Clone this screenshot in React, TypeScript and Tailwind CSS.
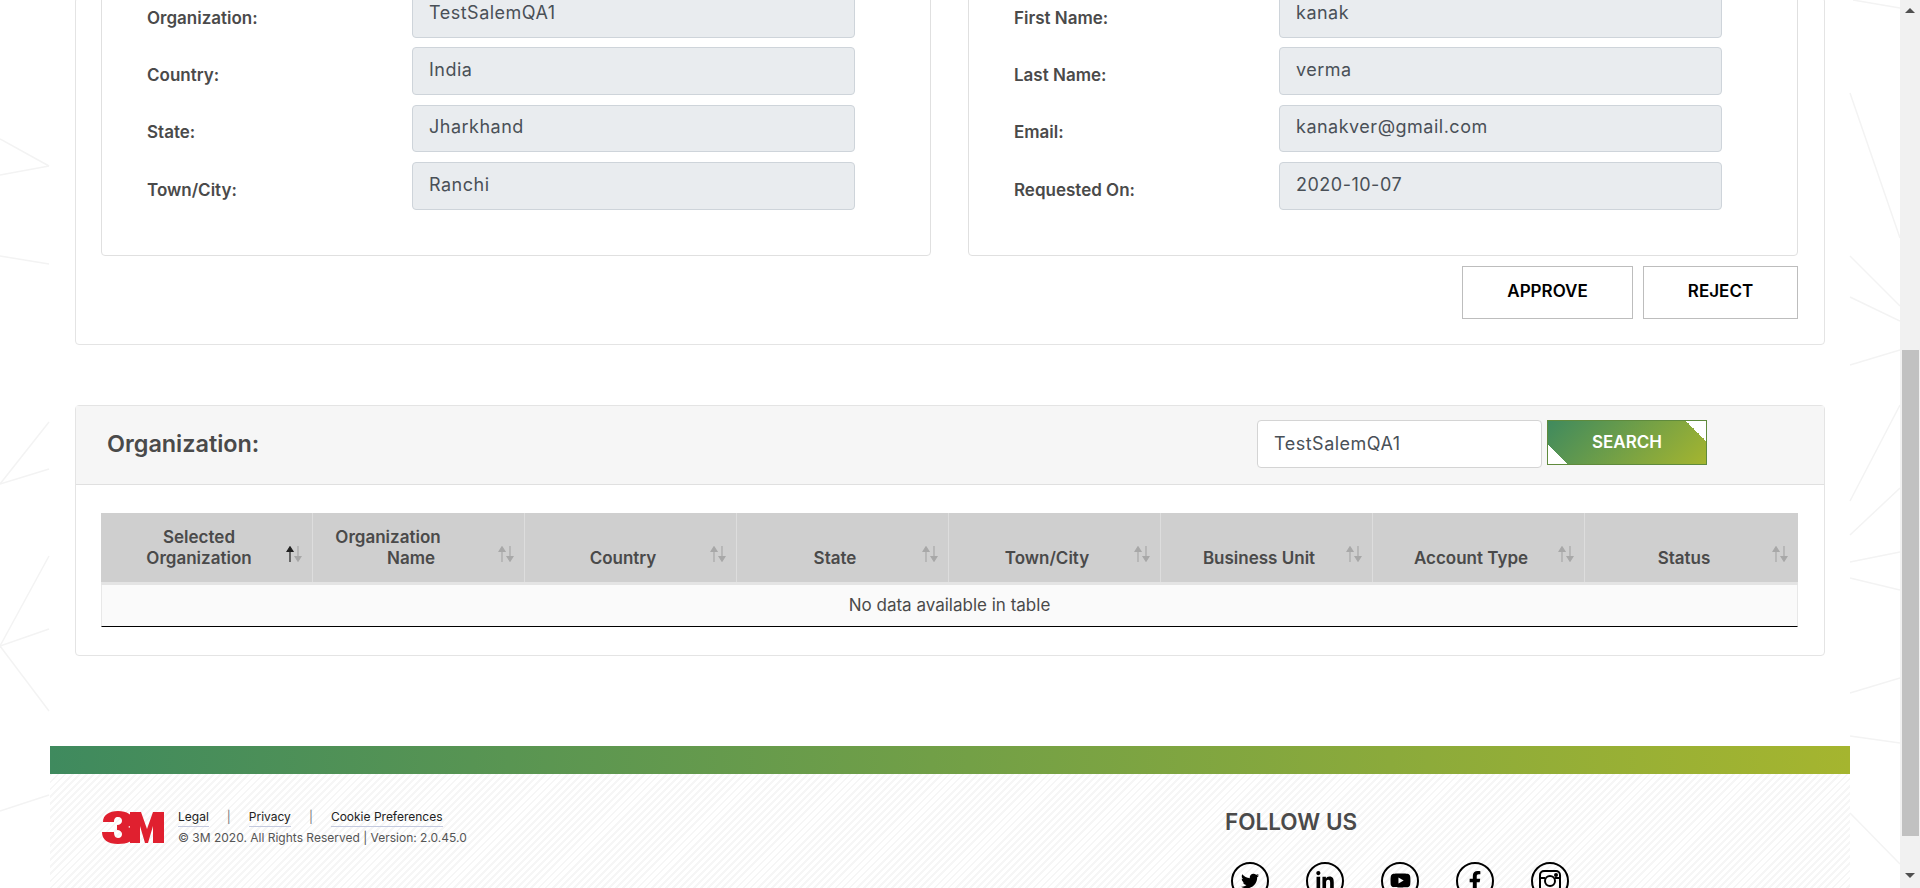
import { FaTwitter, FaLinkedinIn, FaYoutube, FaFacebookF } from "react-icons/fa";

const leftFields = [
  ["Organization:", "TestSalemQA1"],
  ["Country:", "India"],
  ["State:", "Jharkhand"],
  ["Town/City:", "Ranchi"],
];

const rightFields = [
  ["First Name:", "kanak"],
  ["Last Name:", "verma"],
  ["Email:", "kanakver@gmail.com"],
  ["Requested On:", "2020-10-07"],
];

const columns = [
  ["Selected", "Organization"],
  ["Organization", "Name"],
  ["Country"],
  ["State"],
  ["Town/City"],
  ["Business Unit"],
  ["Account Type"],
  ["Status"],
];

// faint burst lines behind the page, left and right of the white column
const bgLines = [
  [0, 139, 49, 166],
  [0, 175, 49, 166],
  [0, 256, 49, 264],
  [0, 484, 49, 422],
  [0, 484, 49, 469],
  [0, 646, 49, 556],
  [0, 646, 49, 629],
  [0, 646, 49, 711],
  [0, 811, 49, 795],
  [1853, 0, 1900, 8],
  [1850, 93, 1900, 238],
  [1850, 256, 1900, 306],
  [1850, 297, 1900, 321],
  [1850, 365, 1900, 350],
  [1850, 501, 1900, 405],
  [1850, 535, 1900, 488],
  [1850, 562, 1900, 552],
  [1850, 578, 1900, 590],
  [1850, 693, 1900, 678],
  [1850, 736, 1900, 743],
  [1850, 813, 1900, 864],
];

const SortIcon = ({ active }: { active: boolean }) => (
  <svg width="16" height="16" viewBox="0 0 16 16" className="mb-[20px] shrink-0">
    <path d="M4 16V3M1 5.5 4 0.8l3 4.7z" fill={active ? "#222" : "#a8a8a8"} stroke={active ? "#222" : "#a8a8a8"} strokeWidth="1.2" />
    <path d="M12 0v13M9 10.5l3 4.7 3-4.7z" fill="#a8a8a8" stroke="#a8a8a8" strokeWidth="1.2" />
  </svg>
);

const FieldCard = ({ fields }: { fields: string[][] }) => (
  <div className="-mt-[20px] flex flex-col gap-[9.67px] rounded border border-[#e0e0e0] pb-[45px] pl-[45px] pt-[11px]">
    {fields.map(([label, value]) => (
      <div key={label} className="flex items-center">
        <label className="mt-[9px] w-[265px] text-[17px] font-semibold text-[#4a4a4a]">{label}</label>
        <input
          readOnly
          value={value}
          className="h-[47.67px] w-[443px] rounded border border-[#ced4da] bg-[#e9ecef] pb-[3px] pl-[16px] text-[18px] tracking-[0.5px] text-[#495057] outline-none"
        />
      </div>
    ))}
  </div>
);

const Logo3M = () => (
  <svg width="62" height="33" viewBox="0 0 62 33" className="shrink-0">
    <path
      fill="#e0202f"
      d="M1 11C1 4 7 0 16 0c9 0 15 4 15 9 0 4-2 6-5 7 4 1 6 4 6 8 0 6-6 9-16 9C6 33 0 29 0 21h12c0 3 1 6 4 6s4-2 4-4-2-4-5-4v-5c3 0 5-2 5-4s-1-4-4-4-4 2-4 5z"
    />
    <path fill="#e0202f" d="M28 1h11l6 17 6-17h11v31H51V15l-5 17h-3l-5-17v17H28z" />
  </svg>
);

const Social = ({ children }: { children: React.ReactNode }) => (
  <div className="flex h-[38px] w-[38px] items-center justify-center rounded-full border-2 border-black text-black">
    {children}
  </div>
);

export default function App() {
  return (
    <div className="relative flex h-[888px] w-full overflow-hidden bg-white font-['Inter',sans-serif] text-[#4a4a4a]">
      {/* background pattern */}
      <svg className="absolute left-0 top-0 h-[888px] w-[1900px]" viewBox="0 0 1900 888">
        {bgLines.map(([x1, y1, x2, y2], i) => (
          <line key={i} x1={x1} y1={y1} x2={x2} y2={y2} stroke="#f3f3f3" strokeWidth="1.5" />
        ))}
      </svg>

      <div className="relative w-[1900px] shrink-0 px-[50px]">
        <div className="flex h-[888px] w-[1800px] flex-col overflow-hidden">
          <div className="px-[25px]">
            {/* request details */}
            <div className="-mt-[3px] rounded border border-[#e4e4e4] pb-[25px] pl-[25px] pr-[26px]">
              <div className="grid grid-cols-[830px_830px] justify-between">
                <FieldCard fields={leftFields} />
                <FieldCard fields={rightFields} />
              </div>
              <div className="mt-[10px] flex justify-end gap-[10px]">
                <button className="h-[53px] w-[171px] border border-[#bdbdbd] text-[17px] font-semibold text-black">APPROVE</button>
                <button className="h-[53px] w-[155px] border border-[#bdbdbd] text-[17px] font-semibold text-black">REJECT</button>
              </div>
            </div>

            {/* organization table */}
            <div className="mt-[60px] h-[251px] rounded border border-[#e4e4e4]">
              <div className="flex h-[79px] items-center border-b border-[#e0e0e0] bg-[#f6f6f6] pl-[31px]">
                <h2 className="mb-[2px] w-[152px] whitespace-nowrap text-[23.4px] font-semibold text-[#4a4a4a]">Organization:</h2>
                <input
                  readOnly
                  value="TestSalemQA1"
                  className="mb-[1px] ml-[998px] h-[48px] w-[285px] rounded border border-[#d4d4d4] bg-white pb-[1px] pl-[16px] text-[18px] tracking-[0.5px] text-[#495057] outline-none"
                />
                <button className="relative mb-[4px] ml-[5px] h-[45px] w-[160px] overflow-hidden border border-[#5f8a3c] bg-[linear-gradient(135deg,#3f8a5e,#a5b52f)] text-[17px] font-semibold text-white">
                  SEARCH
                  <span className="absolute right-0 top-0 h-[20px] w-[20px] bg-[linear-gradient(45deg,transparent_50%,white_50%)]" />
                  <span className="absolute bottom-0 left-0 h-[20px] w-[20px] bg-[linear-gradient(225deg,transparent_50%,white_50%)]" />
                </button>
              </div>
              <div className="ml-[25px] mr-[26px] mt-[28px]">
                <div className="grid grid-cols-[repeat(7,212px)_1fr] border-b-[3px] border-[#e4e4e4] bg-[#cfcfcf]">
                  {columns.map((lines, i) => (
                    <div key={lines[0]} className="flex h-[69px] items-end border-r border-[#dddddd] pb-[13px] pl-[11px] pr-[10px] last:border-r-0">
                      <div className="flex-1 text-center text-[17px] font-semibold leading-[21px] text-[#4a4a4a]">
                        {lines.map((l, n) => (
                          <div key={l} className={i === 1 && n === 0 ? "pr-[46px]" : ""}>{l}</div>
                        ))}
                      </div>
                      <div className="-mb-[13px]">
                        <SortIcon active={i === 0} />
                      </div>
                    </div>
                  ))}
                </div>
                <div className="flex h-[42px] items-center justify-center border-x border-b border-x-[#e8e8e8] border-b-black bg-[#fafafa] pt-[1px] text-[17px] text-[#4a4a4a]">
                  No data available in table
                </div>
              </div>
            </div>
          </div>

          {/* footer */}
          <div className="mt-[90px] h-[28px] shrink-0 bg-[linear-gradient(90deg,#3f8a5e,#a5b52f)]" />
          <div className="flex flex-1 bg-[repeating-linear-gradient(135deg,#f6f6f6_0px,#f6f6f6_2px,#ffffff_2px,#ffffff_5px)] pl-[52px]">
            <div className="flex w-[1123px] shrink-0 items-start gap-[14px] pt-[37px]">
              <Logo3M />
              <div className="-mt-[3px] text-[12px] text-[#444]">
                <div className="flex items-center leading-[18px]">
                  <a className="border-b border-[#c3c9de] text-[#222]">Legal</a>
                  <span className="mx-[18px] text-[#777]">|</span>
                  <a className="border-b border-[#c3c9de] text-[#222]">Privacy</a>
                  <span className="mx-[18px] text-[#777]">|</span>
                  <a className="border-b border-[#c3c9de] text-[#222]">Cookie Preferences</a>
                </div>
                <div className="mt-[2px] leading-[18px] text-[#555]">© 3M 2020. All Rights Reserved | Version: 2.0.45.0</div>
              </div>
            </div>
            <div className="pt-[35px]">
              <h3 className="text-[22.5px] font-semibold leading-[26px] text-[#4a4a4a]">FOLLOW US</h3>
              <div className="ml-[6px] mt-[27px] flex gap-[37px]">
                <Social><FaTwitter size={18} /></Social>
                <Social><FaLinkedinIn size={20} /></Social>
                <Social><FaYoutube size={21} /></Social>
                <Social><FaFacebookF size={20} /></Social>
                <Social>
                  <svg width="22" height="22" viewBox="0 0 22 22" fill="none" stroke="black" strokeWidth="2">
                    <rect x="1" y="1" width="20" height="20" rx="4" />
                    <path d="M1 8h5M16 8h5" />
                    <circle cx="11" cy="11" r="5" />
                    <circle cx="17" cy="5" r="1" fill="black" />
                  </svg>
                </Social>
              </div>
            </div>
          </div>
        </div>
      </div>

      {/* scrollbar */}
      <div className="relative flex w-[20px] shrink-0 flex-col items-center bg-[#f1f1f1]">
        <div className="mt-[8px] h-0 w-0 border-x-[5px] border-b-[5px] border-x-transparent border-b-[#505050]" />
        <div className="mt-[337px] h-[486px] w-[17px] bg-[#c1c1c1]" />
        <div className="mt-[37px] h-0 w-0 border-x-[5px] border-t-[5px] border-x-transparent border-t-[#505050]" />
      </div>
    </div>
  );
}
